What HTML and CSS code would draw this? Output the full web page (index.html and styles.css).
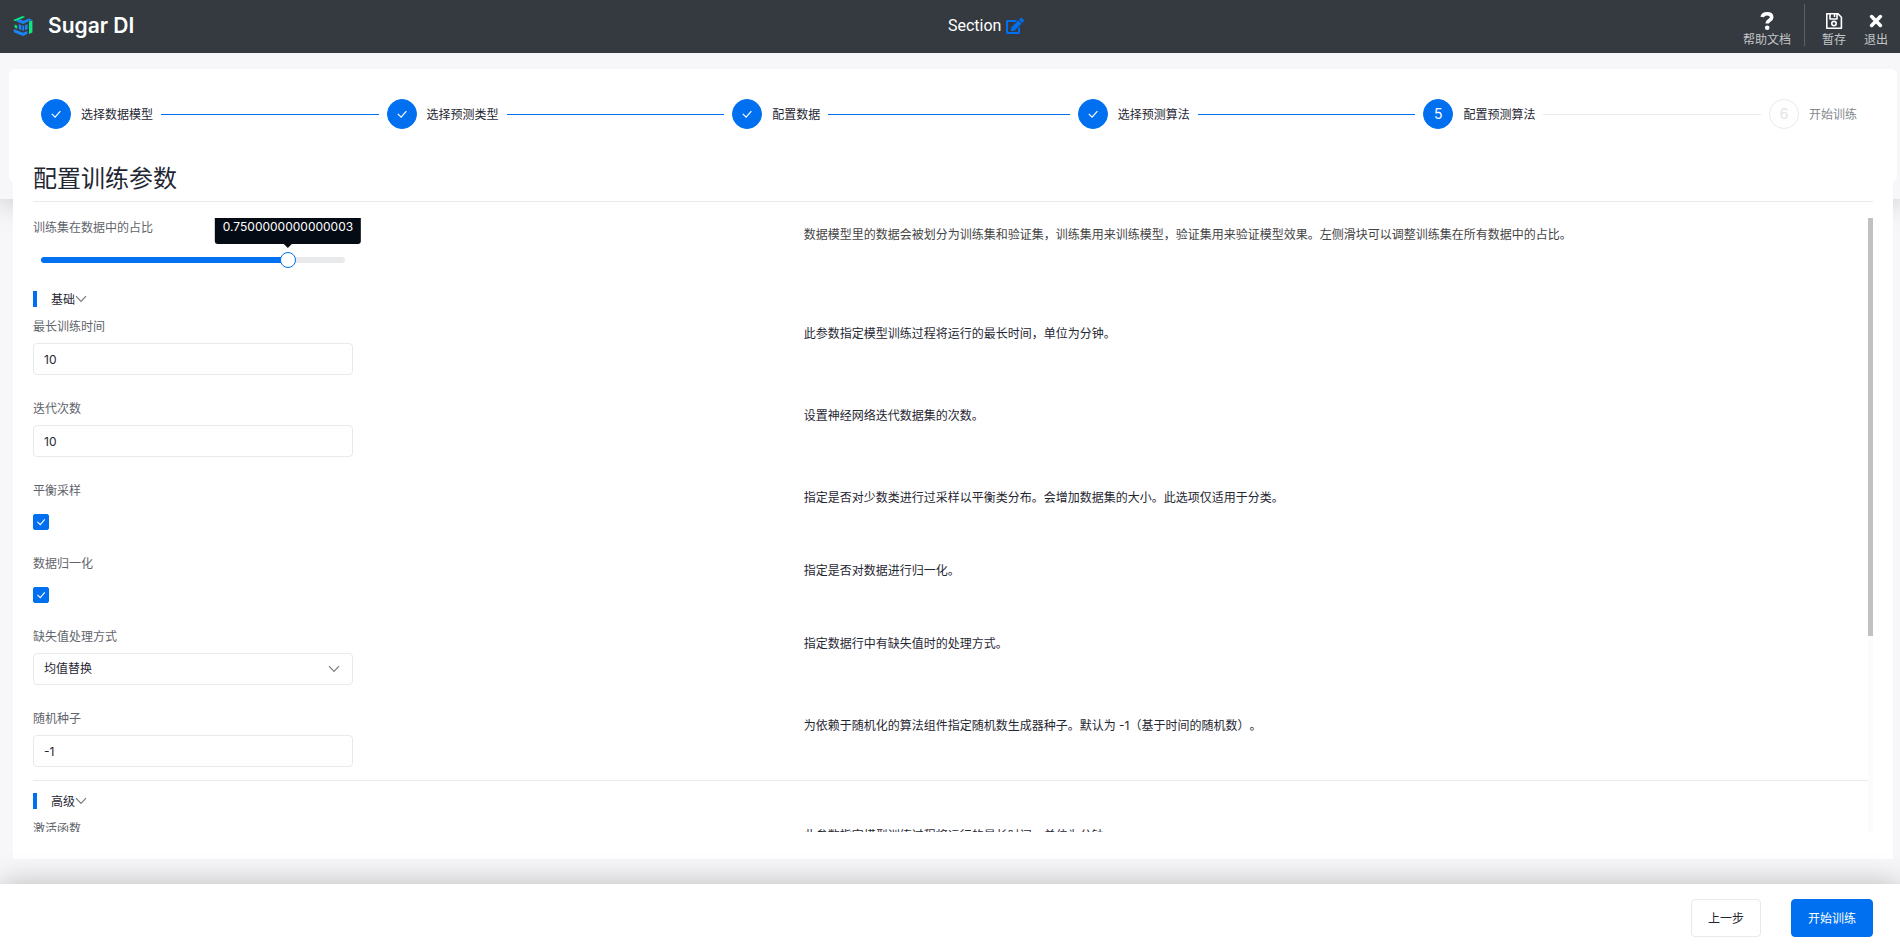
FILE: index.html
```html
<!DOCTYPE html>
<html lang="zh-CN">
<head>
<meta charset="utf-8">
<title>Sugar DI</title>
<link rel="stylesheet" href="styles.css">
</head>
<body>
<svg class="defs" aria-hidden="true">
  <symbol id="check" viewBox="0 0 16 16"><path d="M3.2 7.8 7 11.6 13 4.6" fill="none" stroke="currentColor" stroke-width="1.4"/></symbol>
  <symbol id="chevron" viewBox="0 0 12 12"><path d="M1 3.2 6 8.4 11 3.2" fill="none" stroke="currentColor" stroke-width="1.2"/></symbol>
</svg>

<header class="topbar">
  <div class="brand">
    <svg class="brand-logo" viewBox="0 0 20 20" aria-hidden="true">
      <path d="M.8 3.8 9.6 0 12.200 1 3.800 4.800.8 5Z" fill="#0be881"/>
      <path d="M16 5.600 19.400 4.200v12.400L16 18Z" fill="#0be881"/>
      <path d="M1.600 8.400 4.200 9.800v3L1.600 11.400Z" fill="#0be881"/>
      <path d="M3.800 4.600 7.400 3.600l3 1.200L16.400 2.600l2.600 1.200-8.800 4.200-6.400-2.200Z" fill="#1a84f5"/>
      <path d="M5.800 8 8.400 9.200v5L5.800 13ZM9.300 9.400h1.800v5H9.300ZM12 9.200 14.600 8v5L12 14.200Z" fill="#1a84f5"/>
      <path d="M.8 13 10 16.800l4.400-1.800v3L10 20 .8 16.200Z" fill="#1a84f5"/>
    </svg>
    <span class="brand-name">Sugar DI</span>
  </div>
  <div class="topbar-main">
    <div class="doc-title">
      <span>Section</span>
      <button class="edit" type="button" aria-label="编辑名称">
        <svg viewBox="0 0 576 512" aria-hidden="true"><path fill="currentColor" d="M402.600 83.200l90.200 90.200c3.800 3.800 3.800 10 0 13.800L274.400 405.600l-92.800 10.300c-12.400 1.400-22.900-9.100-21.500-21.500l10.300-92.800L388.800 83.200c3.800-3.800 10-3.800 13.800 0zm162-22.900l-48.800-48.800c-15.200-15.200-39.900-15.200-55.200 0l-35.400 35.400c-3.800 3.800-3.800 10 0 13.800l90.200 90.200c3.800 3.800 10 3.800 13.800 0l35.400-35.400c15.200-15.300 15.200-40 0-55.200zM384 346.200V448H64V128h229.800c3.200 0 6.200-1.300 8.500-3.500l40-40c7.600-7.600 2.200-20.500-8.500-20.500H48C21.500 64 0 85.500 0 112v352c0 26.500 21.500 48 48 48h352c26.500 0 48-21.500 48-48V306.200c0-10.700-12.900-16-20.500-8.500l-40 40c-2.200 2.300-3.500 5.300-3.500 8.500z"/></svg>
      </button>
    </div>
    <nav class="actions">
      <a class="action" href="#help">
        <svg viewBox="0 0 20 20" aria-hidden="true"><path d="M5.200 6C5.600 3.800 7.400 2.700 10 2.700c3 0 4.700 1.500 4.700 3.500 0 3-4.500 3-4.500 6.200" fill="none" stroke="currentColor" stroke-width="3.600"/><circle cx="10.200" cy="16.800" r="2.300" fill="currentColor"/></svg>
        <span>帮助文档</span>
      </a>
      <span class="divider"></span>
      <button class="action" type="button">
        <svg viewBox="0 0 20 20" aria-hidden="true"><g fill="none" stroke="currentColor" stroke-width="1.600" stroke-linejoin="round"><path d="M2.800 2.800H14L17.400 6.200V17.200H2.800ZM6 2.800V8H13V2.800M10.500 3v3"/><circle cx="10" cy="12.600" r="2.200"/></g></svg>
        <span>暂存</span>
      </button>
      <button class="action" type="button">
        <svg viewBox="0 0 20 20" aria-hidden="true"><path d="M5.600 5.600l8.800 8.800M14.400 5.600l-8.800 8.800" stroke="currentColor" stroke-width="3.600" stroke-linecap="round"/></svg>
        <span>退出</span>
      </button>
    </nav>
  </div>
</header>

<section class="steps-wrap">
  <ol class="steps">
    <li class="step done"><span class="dot"><svg><use href="#check"/></svg></span><span class="step-name">选择数据模型</span></li>
    <li class="step done"><span class="dot"><svg><use href="#check"/></svg></span><span class="step-name">选择预测类型</span></li>
    <li class="step done"><span class="dot"><svg><use href="#check"/></svg></span><span class="step-name">配置数据</span></li>
    <li class="step done"><span class="dot"><svg><use href="#check"/></svg></span><span class="step-name">选择预测算法</span></li>
    <li class="step current" aria-current="step"><span class="dot">5</span><span class="step-name">配置预测算法</span></li>
    <li class="step waiting"><span class="dot">6</span><span class="step-name">开始训练</span></li>
  </ol>
</section>

<main class="panel">
  <h1 class="panel-title">配置训练参数</h1>
  <div class="scroller">
    <form class="params" id="params">
      <div class="row row-slider">
        <div class="field">
          <label for="ratio">训练集在数据中的占比</label>
          <div class="slider">
            <output class="tip" for="ratio">0.7500000000000003</output>
            <input id="ratio" type="range" min="0.1" max="0.9" step="0.05" value="0.75">
          </div>
        </div>
        <p class="desc desc-muted">数据模型里的数据会被划分为训练集和验证集，训练集用来训练模型，验证集用来验证模型效果。左侧滑块可以调整训练集在所有数据中的占比。</p>
      </div>

      <section class="group">
        <button class="group-head" type="button"><span>基础</span><svg><use href="#chevron"/></svg></button>
        <div class="row">
          <div class="field"><label for="maxtime">最长训练时间</label><input class="box" id="maxtime" type="text" value="10"></div>
          <p class="desc">此参数指定模型训练过程将运行的最长时间，单位为分钟。</p>
        </div>
        <div class="row">
          <div class="field"><label for="epochs">迭代次数</label><input class="box" id="epochs" type="text" value="10"></div>
          <p class="desc">设置神经网络迭代数据集的次数。</p>
        </div>
        <div class="row">
          <div class="field"><label for="balance">平衡采样</label><span class="tick"><input id="balance" type="checkbox" checked><svg><use href="#check"/></svg></span></div>
          <p class="desc">指定是否对少数类进行过采样以平衡类分布。会增加数据集的大小。此选项仅适用于分类。</p>
        </div>
        <div class="row">
          <div class="field"><label for="normalize">数据归一化</label><span class="tick"><input id="normalize" type="checkbox" checked><svg><use href="#check"/></svg></span></div>
          <p class="desc">指定是否对数据进行归一化。</p>
        </div>
        <div class="row">
          <div class="field"><label for="missing">缺失值处理方式</label><span class="pick"><select class="box" id="missing"><option>均值替换</option></select><svg><use href="#chevron"/></svg></span></div>
          <p class="desc">指定数据行中有缺失值时的处理方式。</p>
        </div>
        <div class="row">
          <div class="field"><label for="seed">随机种子</label><input class="box" id="seed" type="text" value="-1"></div>
          <p class="desc">为依赖于随机化的算法组件指定随机数生成器种子。默认为 -1（基于时间的随机数）。</p>
        </div>
      </section>

      <section class="group group-advanced">
        <button class="group-head" type="button"><span>高级</span><svg><use href="#chevron"/></svg></button>
        <div class="row">
          <div class="field"><label for="activation">激活函数</label><input class="box" id="activation" type="text"></div>
          <p class="desc">此参数指定模型训练过程将运行的最长时间，单位为分钟。</p>
        </div>
      </section>
    </form>
    <div class="scrollbar" aria-hidden="true"><div class="scrollbar-thumb"></div></div>
  </div>
</main>

<footer class="footer">
  <button class="btn" type="button">上一步</button>
  <button class="btn btn-primary" type="submit" form="params">开始训练</button>
</footer>
</body>
</html>
```
FILE: styles.css
```css
:root {
  --blue: #0070f0;
  --ink: #1f2733;
  --muted: #5f646c;
  --line: #e8e9eb;
  --page: #f7f7f9;
}

* { box-sizing: border-box; }

body {
  display: flex;
  flex-direction: column;
  height: 100vh;
  margin: 0;
  overflow: hidden;
  background: var(--page);
  color: var(--ink);
  font: 12px/18px Inter, "Noto Sans CJK SC", sans-serif;
  text-spacing-trim: space-all;
}

button, input, select { font: inherit; color: inherit; }
button { cursor: pointer; }
.defs { position: absolute; width: 0; height: 0; }

/* Top bar */
.topbar {
  position: relative;
  z-index: 3;
  display: grid;
  grid-template-columns: 1fr 1fr;
  align-items: center;
  height: 53px;
  flex: none;
  padding: 0 12px 0 8px;
  background: #343a40;
  color: #fff;
}
.brand { display: flex; align-items: center; gap: 15px; padding: 0 0 4px 5px; }
.brand-logo { width: 20px; height: 20px; }
.brand-name { font-size: 21px; line-height: 24px; font-weight: 600; }
.topbar-main { display: flex; align-items: center; justify-content: space-between; }
.doc-title {
  display: flex;
  align-items: center;
  gap: 5px;
  padding-bottom: 3px;
  font: 16px/24px Roboto, "Noto Sans CJK SC", sans-serif;
}
.edit { display: flex; padding: 0; border: 0; background: none; color: var(--blue); }
.edit svg { width: 18px; height: 16px; }
.actions { display: flex; justify-content: flex-end; align-items: center; padding-top: 4px; }
.action {
  display: flex;
  flex-direction: column;
  align-items: center;
  padding: 0;
  border: 0;
  background: none;
  color: #fff;
  text-decoration: none;
}
.action span { color: #c4c6c8; }
.action svg { width: 20px; height: 20px; }
.action + .action { margin-left: 18px; }
.divider { width: 1px; height: 42px; margin: 0 17px 9px 13px; background: #5d6166; }

/* Steps */
.steps-wrap {
  flex: none;
  padding: 16px 3px 17px 9px;
  background: var(--page);
  box-shadow: 0 0 30px rgba(0, 0, 0, .25);
}
.steps {
  display: flex;
  margin: 0;
  padding: 30px 40px 53px 32px;
  border-radius: 6px;
  background: #fff;
  list-style: none;
}
.step { display: flex; flex: 1; align-items: center; }
.step:not(:last-child)::after { content: ""; flex: 1; height: 1px; margin: 0 8px; background: var(--blue); }
.step.current:not(:last-child)::after { background: var(--line); }
.step:last-child { flex: none; }
.step-name { padding-top: 1px; }
.dot {
  display: flex;
  align-items: center;
  justify-content: center;
  width: 30px;
  height: 30px;
  margin-right: 10px;
  border: 1px solid var(--blue);
  border-radius: 50%;
  background: var(--blue);
  color: #fff;
  font-size: 14px;
}
.dot svg { width: 14px; height: 14px; }
.waiting .dot { border-color: var(--line); background: #fff; color: #e2e3e5; }
.waiting .step-name { color: #84878c; }

/* Parameter panel */
.panel {
  position: relative;
  z-index: 1;
  display: flex;
  flex: 1;
  flex-direction: column;
  min-height: 0;
  margin: -38px 7px 25px 13px;
  padding: 0 20px 27px;
  background: #fff;
}
.panel-title {
  flex: none;
  margin: 0 0 16px;
  padding-bottom: 4px;
  border-bottom: 1px solid var(--line);
  font-size: 24px;
  line-height: 36px;
  font-weight: 400;
}
.scroller { display: flex; flex: 1; min-height: 0; }
.params { flex: 1; overflow-x: hidden; overflow-y: auto; scrollbar-width: none; }
.scrollbar { flex: none; width: 5px; background: #fbfbfb; }
.scrollbar-thumb { height: 68%; background: #c1c1c1; }

.row { display: grid; grid-template-columns: 42% 1fr; padding-bottom: 24px; }
.field { display: flex; flex-direction: column; align-items: flex-start; gap: 6px; }
.field label { color: var(--muted); line-height: 20px; }
.desc { margin: 0; padding-top: 8px; }
.desc-muted { color: #444; }

.box {
  width: 320px;
  height: 32px;
  padding: 0 10px;
  border: 1px solid var(--line);
  border-radius: 4px;
  background: #fff;
}

/* Slider */
.row-slider { padding-bottom: 11px; }
.row-slider .field { gap: 14px; }
.slider { position: relative; display: flex; width: 320px; }
.slider::before {
  content: "";
  position: absolute;
  inset: 5px 8px;
  border-radius: 3px;
  background: linear-gradient(to right, var(--blue) 81%, var(--line) 81%);
}
.slider input {
  position: relative;
  width: 100%;
  height: 16px;
  margin: 0;
  appearance: none;
  background: none;
}
.slider input::-webkit-slider-thumb {
  width: 16px;
  height: 16px;
  appearance: none;
  border: 1px solid var(--blue);
  border-radius: 50%;
  background: #fff;
}
.tip {
  position: absolute;
  bottom: 24px;
  left: 255px;
  padding: 8px;
  border-radius: 3px;
  background: #050b14;
  color: #fff;
  transform: translateX(-50%);
}
.tip::after {
  content: "";
  position: absolute;
  top: 100%;
  left: 50%;
  margin-left: -4px;
  border: 4px solid transparent;
  border-top-color: #050b14;
  border-bottom: 0;
}

/* Groups */
.group { margin-top: 10px; }
.group .row:last-child { padding-bottom: 13px; }
.group-head {
  display: flex;
  align-items: center;
  margin: 0 0 8px;
  padding: 0;
  border: 0;
  background: none;
  line-height: 18px;
}
.group-head span { padding-top: 2px; }
.group-head::before { content: ""; width: 4px; height: 16px; margin-right: 14px; background: var(--blue); }
.group-head svg { width: 12px; height: 12px; color: #777b82; }
.group-advanced { margin-top: 0; padding: 10px 0 220px; border-top: 1px solid var(--line); }

.tick { position: relative; display: flex; width: 16px; height: 16px; margin-top: 7px; }
.tick input { width: 16px; height: 16px; margin: 0; appearance: none; border: 1px solid #c9cbd0; border-radius: 2px; }
.tick input:checked { border-color: var(--blue); background: var(--blue); }
.tick svg { position: absolute; inset: 2px; width: 12px; height: 12px; color: #fff; pointer-events: none; }

.pick { position: relative; display: flex; }
.pick select { appearance: none; }
.pick svg { position: absolute; top: 10px; right: 13px; width: 12px; height: 12px; color: #777b82; pointer-events: none; }

/* Footer */
.footer {
  z-index: 2;
  display: flex;
  flex: none;
  justify-content: flex-end;
  gap: 30px;
  padding: 15px 27px 10px;
  background: #fff;
  box-shadow: 0 0 30px rgba(0, 0, 0, .25);
}
.btn { height: 38px; padding: 1px 16px 0; border: 1px solid var(--line); border-radius: 4px; background: #fff; }
.btn-primary { border-color: var(--blue); background: var(--blue); color: #fff; }
```
